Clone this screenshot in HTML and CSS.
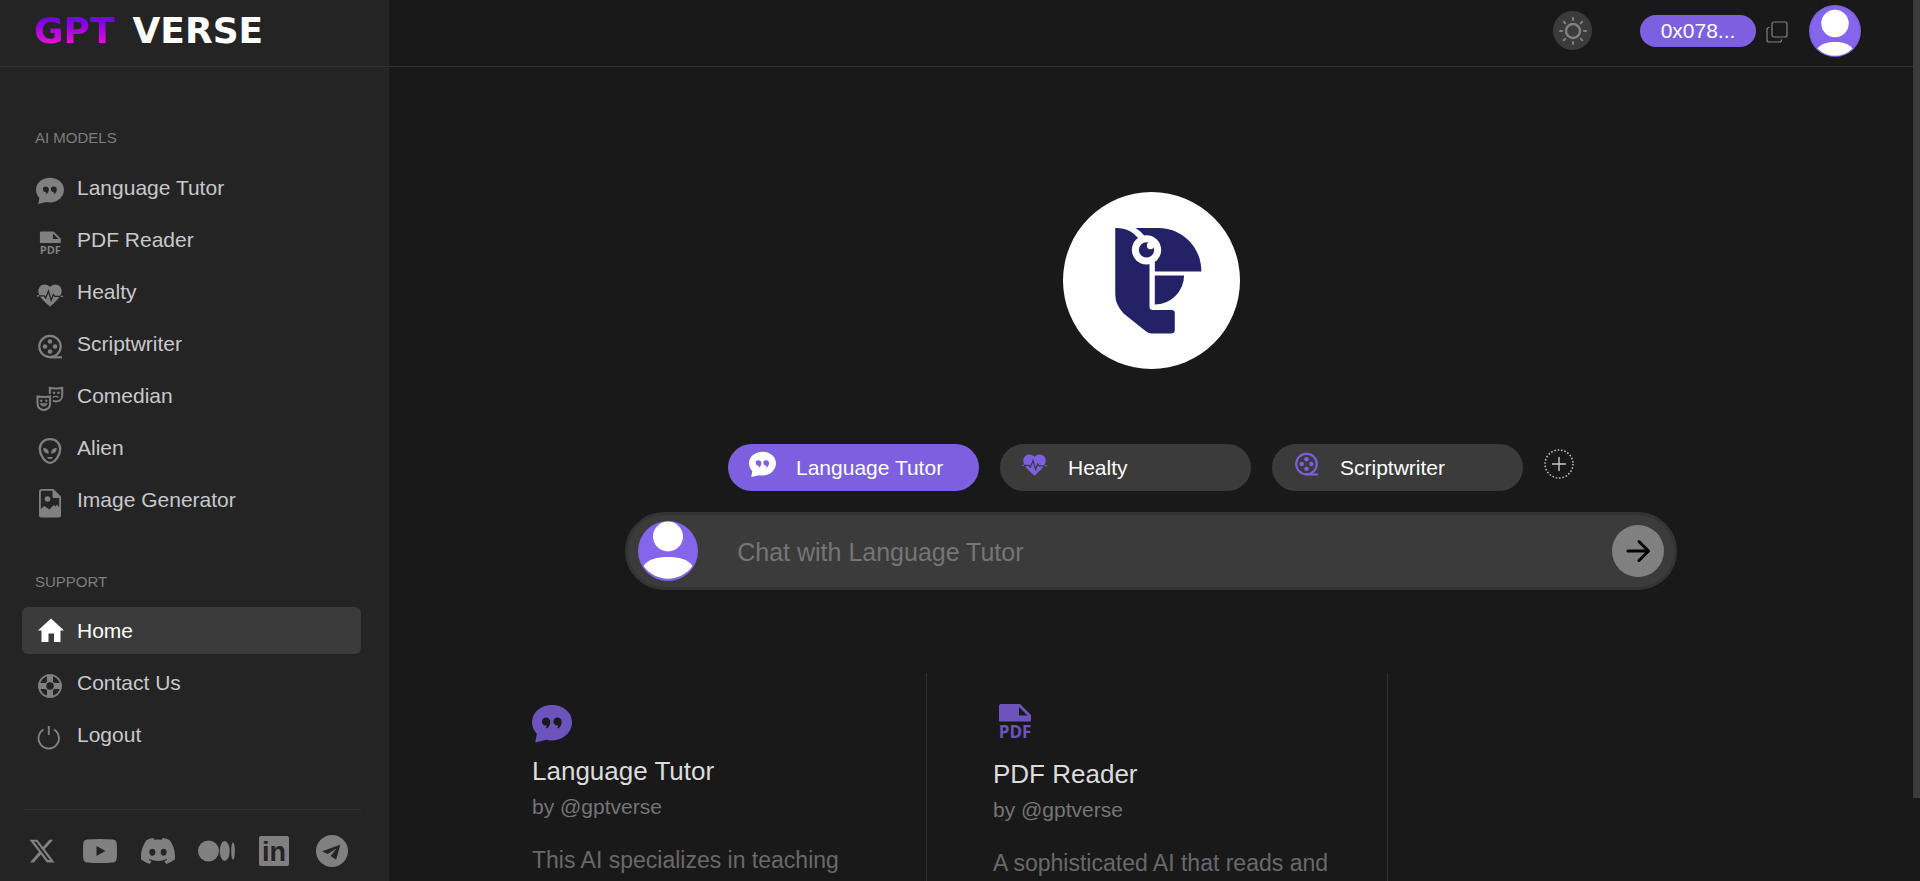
FILE: index.html
```html
<!DOCTYPE html>
<html lang="en">
<head>
  <meta charset="UTF-8">
  <meta name="viewport" content="width=device-width, initial-scale=1.0">
  <title>GPTVerse</title>
  <link rel="stylesheet" href="styles.css">
</head>
<body>

<!-- icons -->
<svg class="sprite" aria-hidden="true">
  <symbol id="i-quote" viewBox="0 0 28 28">
    <path fill-rule="evenodd" d="M14 .7C6.2.7 0 5.9 0 12.8c0 3.1 1.3 6 3.4 8.1L2.3 27l8-1.9c1.2.3 2.4.4 3.7.4 7.8 0 14-5.7 14-12.7S21.800.7 14 .7zM9.700 9.500a2.800 2.800 0 1 0 .8 5.500c-.1.600-.4 1-.9 1.500l.8.600c1.600-1.100 2.400-2.700 2.400-4.700 0-1.700-1.300-2.900-3.100-2.900zM17.700 9.500a2.800 2.800 0 1 0 .8 5.500c-.1.600-.4 1-.9 1.500l.8.600c1.600-1.100 2.400-2.700 2.400-4.700 0-1.700-1.300-2.900-3.100-2.900z"/>
  </symbol>
  <symbol id="i-heart" viewBox="0 0 24 24">
    <mask id="pulse" maskUnits="userSpaceOnUse" x="0" y="0" width="24" height="24">
      <rect width="24" height="24" fill="#fff"/>
      <path d="M0 12.7h7l1.300 1.800 2.400-6 2.300 8 1.800-5 1.400 1.700H24" fill="none" stroke="#000" stroke-width="1.1"/>
    </mask>
    <path mask="url(#pulse)" d="M12 22l-1.500-1.400C5.400 15.900 2 12.500 2 8.500 2 5.400 4.400 3 7.500 3c1.700 0 3.400.8 4.500 2.100C13.100 3.800 14.800 3 16.500 3 19.600 3 22 5.400 22 8.500c0 4-3.400 7.400-8.500 12.100z"/>
    <path d="M.8 12.700h2M21.200 13.200h2" fill="none" stroke="currentColor"/>
  </symbol>
  <symbol id="i-reel" viewBox="0 0 28 28">
    <g fill="none" stroke="currentColor" stroke-width="2.2"><circle cx="14" cy="13.5" r="10.7"/><path d="M14 24.300h12"/></g>
    <circle cx="14" cy="8.5" r="2.3"/><circle cx="9" cy="13.5" r="2.3"/><circle cx="19" cy="13.5" r="2.3"/><circle cx="14" cy="18.5" r="2.3"/>
  </symbol>
  <symbol id="i-masks" viewBox="0 0 28 28">
    <g fill="none" stroke="currentColor" stroke-width="2">
      <path d="M1.500 11.500c4 .6 8.600.6 12.600 0v7c0 4-3 6.500-6.300 6.500s-6.300-2.500-6.300-6.500z"/>
      <path d="M13.800 9V3c4 .6 8.400.6 12.400 0v7.500c0 4-3.200 6-6.200 6-1 0-2-.3-3-.8"/>
      <path d="M4.800 19c1.500 2.500 4.500 2.500 6 0z" stroke-width="1.300"/>
      <path d="M17 12.500c1.500-1.500 4-1.500 5.500 0" stroke-width="1.500"/>
    </g>
    <circle cx="5.300" cy="15.800" r="1.200"/><circle cx="10.300" cy="15.800" r="1.200"/><circle cx="18" cy="7.800" r="1.200"/><circle cx="22.500" cy="7.800" r="1.200"/>
  </symbol>
  <symbol id="i-alien" viewBox="0 0 28 28">
    <path d="M14 2.200C7.800 2.200 3.800 6.300 3.800 12c0 6 5.200 13.800 10.200 13.800S24.200 18 24.200 12c0-5.700-4-9.800-10.200-9.800z" fill="none" stroke="currentColor" stroke-width="2.300"/>
    <path d="M7.300 11c3.300-.2 5.700 2 5.500 5.500-3.300.2-5.700-2-5.500-5.500zM20.700 11c-3.300-.2-5.700 2-5.500 5.500 3.300.2 5.700-2 5.500-5.500z"/>
    <path d="M11 20h6c-.5 2.700-5.500 2.700-6 0z"/>
  </symbol>
  <symbol id="i-image" viewBox="0 0 28 30">
    <path fill-rule="evenodd" d="M6 1h11.500L25 8.500V27a2.500 2.500 0 0 1-2.500 2.500h-17A2.500 2.500 0 0 1 3 27V4a3 3 0 0 1 3-3zM6 2.800c-.8 0-1.200.5-1.200 1.200v17l3.500-3 5 3.500 4.500-4.500 1.700 1.500 1.700-2 2 3V10H18a1.500 1.500 0 0 1-1.500-1.500V2.800z"/>
    <circle cx="11.500" cy="11" r="2.800"/>
  </symbol>
  <symbol id="i-home" viewBox="0 0 28 28">
    <path d="M15 1.500l13 12h-3.500V25h-6.500v-8.500h-5.500V25H5.500V13.500H2z"/>
  </symbol>
  <symbol id="i-buoy" viewBox="0 0 28 28">
    <g fill="none" stroke="currentColor"><circle cx="14" cy="14" r="11" stroke-width="1.700"/><circle cx="14" cy="14" r="4.500" stroke-width="1.500"/></g>
    <path d="M11 2.500h6v7.600h-6zM11 18h6v7.500h-6zM2.500 11h7.600v6H2.500zM18 11h7.500v6H18z"/>
  </symbol>
  <symbol id="i-power" viewBox="0 0 28 28">
    <path d="M7.500 5.500a10.200 10.200 0 1 0 10.500 0M12.800 2v9" fill="none" stroke="currentColor" stroke-width="1.900"/>
  </symbol>
</svg>

<div class="app">
  <aside class="sidebar">
    <a class="logo" href="#"><span class="logo-gpt">GPT</span><span>VERSE</span></a>

    <nav class="side-nav">
      <h2>AI MODELS</h2>
      <ul>
        <li><a href="#"><svg><use href="#i-quote"/></svg><span>Language Tutor</span></a></li>
        <li><a href="#">
          <svg viewBox="0 0 43 43">
            <path fill-rule="evenodd" d="M8 4h19l11 11v6.500H6V6a2 2 0 0 1 2-2zM26 7v8.500h8.500z"/>
            <text x="22" y="38" text-anchor="middle" class="pdf-label">PDF</text>
          </svg><span>PDF Reader</span></a></li>
        <li><a href="#"><svg><use href="#i-heart"/></svg><span>Healty</span></a></li>
        <li><a href="#"><svg><use href="#i-reel"/></svg><span>Scriptwriter</span></a></li>
        <li><a href="#"><svg><use href="#i-masks"/></svg><span>Comedian</span></a></li>
        <li><a href="#"><svg><use href="#i-alien"/></svg><span>Alien</span></a></li>
        <li><a href="#"><svg class="tall"><use href="#i-image"/></svg><span>Image Generator</span></a></li>
      </ul>
      <h2>SUPPORT</h2>
      <ul>
        <li><a class="active" href="#"><svg><use href="#i-home"/></svg><span>Home</span></a></li>
        <li><a href="#"><svg><use href="#i-buoy"/></svg><span>Contact Us</span></a></li>
        <li><a href="#"><svg><use href="#i-power"/></svg><span>Logout</span></a></li>
      </ul>
    </nav>

    <div class="social">
      <a href="#" aria-label="X"><svg width="28" height="28" viewBox="0 0 24 24"><path d="M18.244 2.250h3.308l-7.227 8.260 8.502 11.240H16.170l-5.214-6.817L4.990 21.750H1.680l7.730-8.835L1.254 2.250H8.080l4.713 6.231zm-1.161 17.520h1.833L7.084 4.126H5.117z"/></svg></a>
      <a href="#" aria-label="YouTube"><svg width="34" height="24" viewBox="0 0 34 24"><path fill-rule="evenodd" d="M4 .5Q17-.5 30 .5q3.500.5 3.700 4 .6 7.500 0 15-.2 3.500-3.700 4-13 1-26 0-3.500-.5-3.700-4-.6-7.500 0-15Q.5 1 4 .5zM13.500 7v10l9-5z"/></svg></a>
      <a href="#" aria-label="Discord"><svg width="34" height="34" viewBox="0 0 16 16"><path fill-rule="evenodd" d="M13.545 2.907a13.200 13.200 0 0 0-3.257-1.011c-.2.100-.35.500-.458.858a12.200 12.200 0 0 0-3.658 0c-.1-.3-.25-.7-.464-.858-1.125.194-2.220.534-3.257 1.011C.356 6.024-.213 9.047.066 12.032a13.300 13.300 0 0 0 4.016 2.057c.35-.4.650-.85.874-1.348-.5-.2-.9-.4-1.276-.665l.3-.3c2.619 1.196 5.454 1.196 8.041 0l.3.300c-.4.270-.8.480-1.276.665.240.490.520.930.874 1.348a13.200 13.200 0 0 0 4.022-2.057c.334-3.451-.559-6.449-2.396-9.125zM5.347 10.214c-.789 0-1.438-.724-1.438-1.612 0-.889.637-1.613 1.438-1.613.807 0 1.450.730 1.438 1.613 0 .888-.637 1.612-1.438 1.612zm5.316 0c-.788 0-1.438-.724-1.438-1.612 0-.889.637-1.613 1.438-1.613.807 0 1.451.730 1.438 1.613 0 .888-.631 1.612-1.438 1.612z"/></svg></a>
      <a href="#" aria-label="Medium"><svg width="37" height="22" viewBox="0 0 37 22"><ellipse cx="10.500" cy="11" rx="10.500" ry="10.500"/><ellipse cx="26.700" cy="11" rx="5" ry="10"/><ellipse cx="35" cy="11" rx="1.800" ry="8.800"/></svg></a>
      <a href="#" aria-label="LinkedIn"><svg width="30" height="30" viewBox="0 0 30 30"><rect width="30" height="30" rx="2"/><text class="in-label" x="15" y="25" text-anchor="middle">in</text></svg></a>
      <a href="#" aria-label="Telegram"><svg width="32" height="32" viewBox="0 0 31 31"><path fill-rule="evenodd" d="M15.500 0a15.500 15.500 0 1 1 0 31 15.500 15.500 0 0 1 0-31zM6 15.700l17.500-6.200L19.500 24l-5.300-3.700 5.700-7.200-8.600 5.400z"/></svg></a>
    </div>
  </aside>

  <main class="main">
    <header class="topbar">
      <button class="theme" aria-label="Toggle theme">
        <svg width="30" height="30" viewBox="0 0 30 30" fill="none" stroke="currentColor" stroke-linecap="round" stroke-width="2">
          <circle cx="15" cy="15" r="7" stroke-width="2.500"/>
          <path d="M15 2v2M15 26v2M2 15h2M26 15h2M5.800 5.800l1.400 1.400M22.800 22.800l1.400 1.400M24.200 5.800l-1.400 1.400M7.200 22.800l-1.400 1.400"/>
        </svg>
      </button>
      <button class="wallet">0x078...</button>
      <button class="copy" aria-label="Copy address">
        <svg width="22" height="22" viewBox="0 0 22 22" fill="none" stroke="currentColor" stroke-width="1.200">
          <rect x="6" y="1" width="15" height="15" rx="2"/>
          <path d="M3.500 6.500H3a2 2 0 0 0-2 2V19a2 2 0 0 0 2 2h10.500a2 2 0 0 0 2-2v-.5"/>
        </svg>
      </button>
      <button class="account" aria-label="Account">
        <svg width="52" height="52" viewBox="0 0 52 52">
          <circle cx="26" cy="26" r="26" fill="#7c60e0"/>
          <circle cx="26" cy="26" r="24.500" fill="#8465ec"/>
          <circle cx="26" cy="18.500" r="13.700" fill="#fff"/>
          <path d="M8.500 43.500C12 38.500 19 37 26 37s14 1.500 17.500 6.500A24.500 24.500 0 0 1 8.500 43.500z" fill="#fff"/>
        </svg>
      </button>
    </header>

    <section class="hero">
      <svg class="bot" viewBox="68 66 532 532">
        <circle cx="334" cy="332" r="266" fill="#fff"/>
        <g fill="#242267">
          <path d="M225 174h8c28 2 48 13 63 34l32 72v131q0 10 10 10h56q10 0 10 10v50q0 10-10 10h-60q-8 0-16-6l-67-53Q225 405 225 375z"/>
          <path d="M286 174h72c72 2 126 60 126 131H344v-60l-30-46c-7-9-15-17-28-25z"/>
          <path d="M344 317h88a88 88 0 0 1-88 87z"/>
        </g>
        <circle cx="319" cy="240" r="44" fill="#fff"/>
        <circle cx="319" cy="240" r="23" fill="#242267"/>
        <circle cx="331" cy="227" r="11" fill="#fff"/>
      </svg>

      <div class="tabs">
        <button class="tab active"><svg><use href="#i-quote"/></svg>Language Tutor</button>
        <button class="tab"><svg><use href="#i-heart"/></svg>Healty</button>
        <button class="tab"><svg><use href="#i-reel"/></svg>Scriptwriter</button>
        <button class="add" aria-label="Add model">
          <svg width="30" height="30" viewBox="0 0 30 30" fill="none" stroke="currentColor">
            <circle cx="15" cy="15" r="14" stroke-width="1.500" stroke-dasharray="1.500 1.880"/>
            <path d="M8 15h14M15 8v14" stroke-width="1.400"/>
          </svg>
        </button>
      </div>

      <form class="chat">
        <svg width="60" height="60" viewBox="0 0 60 60">
          <circle cx="30" cy="30" r="30" fill="#8465ec"/>
          <circle cx="30" cy="15.500" r="15" fill="#fff"/>
          <path d="M5.500 45C10 38 19 36 30 36s20 2 24.500 9a30 30 0 0 1-49 0z" fill="#fff"/>
        </svg>
        <input type="text" placeholder="Chat with Language Tutor" aria-label="Message">
        <button type="button" class="send" aria-label="Send">
          <svg width="26" height="26" viewBox="0 0 26 26" fill="none" stroke="currentColor" stroke-width="3" stroke-linecap="round" stroke-linejoin="round"><path d="M3 13h20M14 3.500l9.500 9.500-9.500 9.500"/></svg>
        </button>
      </form>
    </section>

    <section class="cards">
      <article class="card">
        <svg class="card-icon"><use href="#i-quote"/></svg>
        <h3>Language Tutor</h3>
        <p class="author">by @gptverse</p>
        <p class="desc">This AI specializes in teaching</p>
      </article>
      <article class="card">
        <svg class="card-icon pdf" viewBox="0 0 43 43">
          <path fill-rule="evenodd" d="M8 4h19l11 11v6.500H6V6a2 2 0 0 1 2-2zM26 7v8.500h8.500z"/>
          <text x="22" y="38" text-anchor="middle" class="pdf-label">PDF</text>
        </svg>
        <h3>PDF Reader</h3>
        <p class="author">by @gptverse</p>
        <p class="desc">A sophisticated AI that reads and</p>
      </article>
    </section>
  </main>
</div>

<div class="scrollbar"></div>

</body>
</html>
```
FILE: styles.css
```css
* {
  box-sizing: border-box;
}

body {
  margin: 0;
  background: #191919;
  color: #fff;
  font-family: "Liberation Sans", Arial, sans-serif;
  font-size: 21px;
  overflow: hidden;
}

h2, h3, p, ul {
  margin: 0;
  padding: 0;
  font-weight: normal;
}

ul {
  list-style: none;
}

a {
  color: inherit;
  text-decoration: none;
}

button {
  border: 0;
  padding: 0;
  background: none;
  color: inherit;
  font: inherit;
  cursor: pointer;
}

svg {
  display: block;
  flex-shrink: 0;
  fill: currentColor;
}

svg[fill="none"] {
  fill: none;
}

.sprite {
  position: absolute;
  width: 0;
  height: 0;
}

.pdf-label {
  font-family: "Open Sans", sans-serif;
  font-size: 17px;
  font-weight: bold;
}

.app {
  display: flex;
  height: 100vh;
}

/* sidebar */
.sidebar {
  width: 389px;
  flex-shrink: 0;
  background: #242424;
  border-right: 1px solid #292929;
}

.logo {
  display: flex;
  align-items: center;
  gap: 18px;
  height: 67px;
  padding: 0 0 6px 34px;
  border-bottom: 1px solid #333;
  font-family: "DejaVu Sans", sans-serif;
  font-size: 36px;
  font-weight: bold;
}

.logo-gpt {
  background: linear-gradient(#7a00e6 25%, #e010d8 80%);
  background-clip: text;
  -webkit-background-clip: text;
  color: transparent;
}

.side-nav {
  padding: 62px 27px 51px 22px;
}

.side-nav h2 {
  padding-left: 13px;
  margin-bottom: 17px;
  font-size: 15px;
  line-height: 18px;
  color: #7d7d7d;
}

.side-nav ul + h2 {
  margin-top: 50px;
  margin-bottom: 16px;
}

.side-nav li + li {
  margin-top: 5px;
}

.side-nav a {
  display: flex;
  align-items: center;
  gap: 13px;
  height: 47px;
  padding: 1px 14px 0;
  border-radius: 6px;
  color: #c8c8cc;
}

.side-nav svg {
  width: 28px;
  height: 28px;
  margin-top: 6px;
  color: #808080;
}

.side-nav svg.tall {
  height: 30px;
}

.side-nav a.active {
  background: #3b3b3b;
  color: #fff;
}

.side-nav a.active svg {
  margin-top: 0;
  color: #fff;
}

.social {
  display: flex;
  align-items: center;
  justify-content: space-between;
  height: 82px;
  margin: 0 27px 0 24px;
  padding: 0 12px 0 1px;
  border-top: 1px solid #333;
  color: #808080;
}

.social a {
  display: flex;
  justify-content: center;
  width: 34px;
}

.in-label {
  fill: #242424;
  font-size: 27px;
  font-weight: bold;
}

/* main */
.main {
  flex: 1;
  margin-right: 7px;
}

.topbar {
  display: flex;
  align-items: center;
  justify-content: flex-end;
  height: 67px;
  padding: 0 52px 5px 0;
  border-bottom: 1px solid #333;
}

.theme {
  display: grid;
  place-items: center;
  width: 39px;
  height: 39px;
  margin-right: 48px;
  border-radius: 50%;
  background: #3b3b3b;
  color: #808080;
}

.wallet {
  width: 116px;
  height: 32px;
  border-radius: 16px;
  background: #7c60e0;
}

.copy {
  margin: 3px 21px 0 10px;
  color: #808080;
}

.hero {
  display: flex;
  flex-direction: column;
  align-items: center;
  padding-top: 125px;
}

.bot {
  width: 177px;
  height: 177px;
}

.tabs {
  display: flex;
  gap: 21px;
  margin: 75px 0 21px;
}

.tab {
  display: flex;
  align-items: center;
  gap: 20px;
  width: 251px;
  height: 47px;
  padding-left: 21px;
  border-radius: 24px;
  background: #3b3b3b;
}

.tab svg {
  width: 27px;
  height: 27px;
  margin-bottom: 6px;
  color: #7c60e0;
}

.tab.active {
  background: #7c60e0;
}

.tab.active svg {
  color: #fff;
}

.add {
  margin-bottom: 8px;
  color: #c8c8c8;
}

.chat {
  display: flex;
  align-items: center;
  width: 69%;
  height: 78px;
  padding: 0 10px;
  border: 3px solid #333;
  border-radius: 39px;
  background: #3b3b3b;
}

.chat input {
  flex: 1;
  padding: 2px 39px 0;
  border: 0;
  outline: 0;
  background: none;
  color: #fff;
  font: inherit;
  font-size: 25px;
}

.chat input::placeholder {
  color: #757575;
}

.send {
  display: grid;
  place-items: center;
  width: 52px;
  height: 52px;
  border-radius: 50%;
  background: #808080;
  color: #000;
}

/* cards */
.cards {
  display: grid;
  grid-template-columns: repeat(3, 1fr);
  margin-top: 83px;
  padding: 0 64px 0 77px;
}

.card {
  height: 208px;
  padding: 27px 0 0 66px;
  border-right: 1px solid #333;
}

.card-icon {
  width: 40px;
  height: 48px;
  margin-bottom: 8px;
  color: #6c54bc;
}

.card-icon.pdf {
  width: 43px;
  height: 43px;
  margin-bottom: 16px;
}

.card h3 {
  margin-bottom: 9px;
  font-size: 26px;
  line-height: 30px;
  color: #dcdcdc;
}

.author {
  margin-bottom: 27px;
  line-height: 24px;
  color: #757575;
}

.desc {
  font-size: 23px;
  line-height: 28px;
  color: #69696b;
}

/* page scrollbar thumb */
.scrollbar {
  position: fixed;
  top: 0;
  right: 0;
  width: 7px;
  height: 798px;
  background: #3b3b3b;
}
```
